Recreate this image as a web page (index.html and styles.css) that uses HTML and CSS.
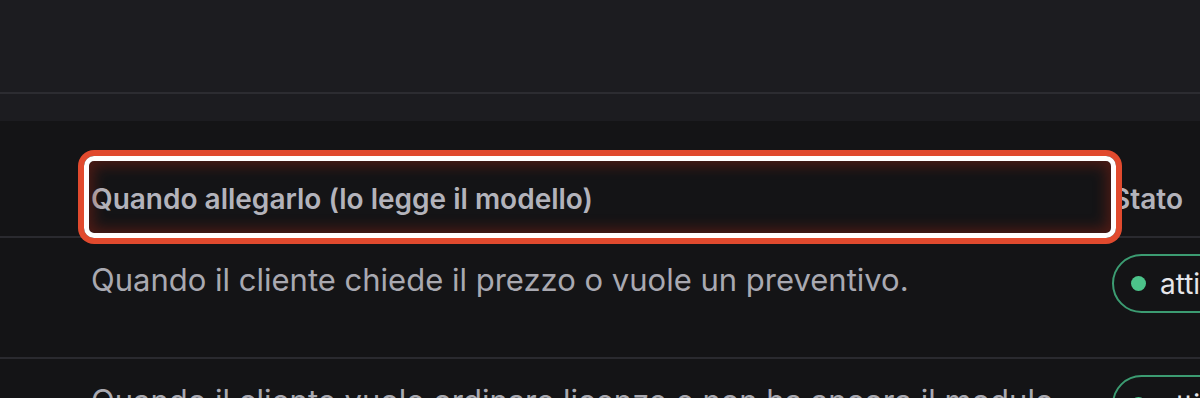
FILE: index.html
```html
<!DOCTYPE html>
<html lang="it">
<head>
<meta charset="utf-8">
<title>Allegati</title>
<link rel="stylesheet" href="styles.css">
</head>
<body>
<div class="topbar"></div>
<div class="subbar"></div>
<div class="table">
  <div class="row head">
    <div class="cell main">Quando allegarlo (lo legge il modello)</div>
    <div class="cell state">Stato</div>
  </div>
  <div class="row">
    <div class="cell main">Quando il cliente chiede il prezzo o vuole un preventivo.</div>
    <div class="cell state"><span class="badge"><span class="dot"></span>attivo</span></div>
  </div>
  <div class="row">
    <div class="cell main">Quando il cliente vuole ordinare licenze e non ha ancora il modulo.</div>
    <div class="cell state"><span class="badge"><span class="dot"></span>attivo</span></div>
  </div>
  <div class="highlight"></div>
</div>
</body>
</html>
```

FILE: styles.css
```css
html, body {
  margin: 0;
  padding: 0;
  background: #141416;
  overflow: hidden;
  font-family: Inter, "Noto Sans", sans-serif;
}
.topbar {
  height: 92px;
  background: #1c1c20;
  border-bottom: 2px solid #2c2c31;
}
.subbar {
  height: 27px;
  background: #1c1c20;
}
.table {
  position: relative;
  width: 1400px;
}
.row {
  display: grid;
  grid-template-columns: 1112px 1fr;
  border-bottom: 2px solid #2a2a2f;
  min-height: 121px;
  box-sizing: border-box;
}
.row.head {
  min-height: 0;
}
.cell {
  box-sizing: border-box;
}
.head .cell {
  padding: 61px 0 20px;
  line-height: 34px;
  font-size: 28px;
  font-weight: 600;
  color: #b3b3bb;
}
.row .main {
  padding-left: 91px;
}
.row:not(.head) .main {
  padding-top: 23px;
  font-size: 31px;
  line-height: 38px;
  color: #a9a9b1;
}
.row:not(.head) .state {
  padding-top: 16px;
}
.head .state {
  padding-left: 0;
}
.badge {
  display: inline-flex;
  align-items: center;
  gap: 14px;
  height: 59px;
  box-sizing: border-box;
  padding: 0 22px 0 17px;
  border: 2px solid #3c9c72;
  border-radius: 30px;
  font-size: 28px;
  color: #e6e6ea;
}
.dot {
  width: 15px;
  height: 15px;
  border-radius: 50%;
  background: #4cc38a;
}
.highlight {
  position: absolute;
  left: 84px;
  top: 35px;
  width: 1032px;
  height: 82px;
  box-sizing: border-box;
  border: 5px solid #ffffff;
  border-radius: 10px;
  box-shadow: 0 0 0 6px #e14a2e, inset 0 0 14px 4px rgba(150, 35, 20, 0.45);
}
```
